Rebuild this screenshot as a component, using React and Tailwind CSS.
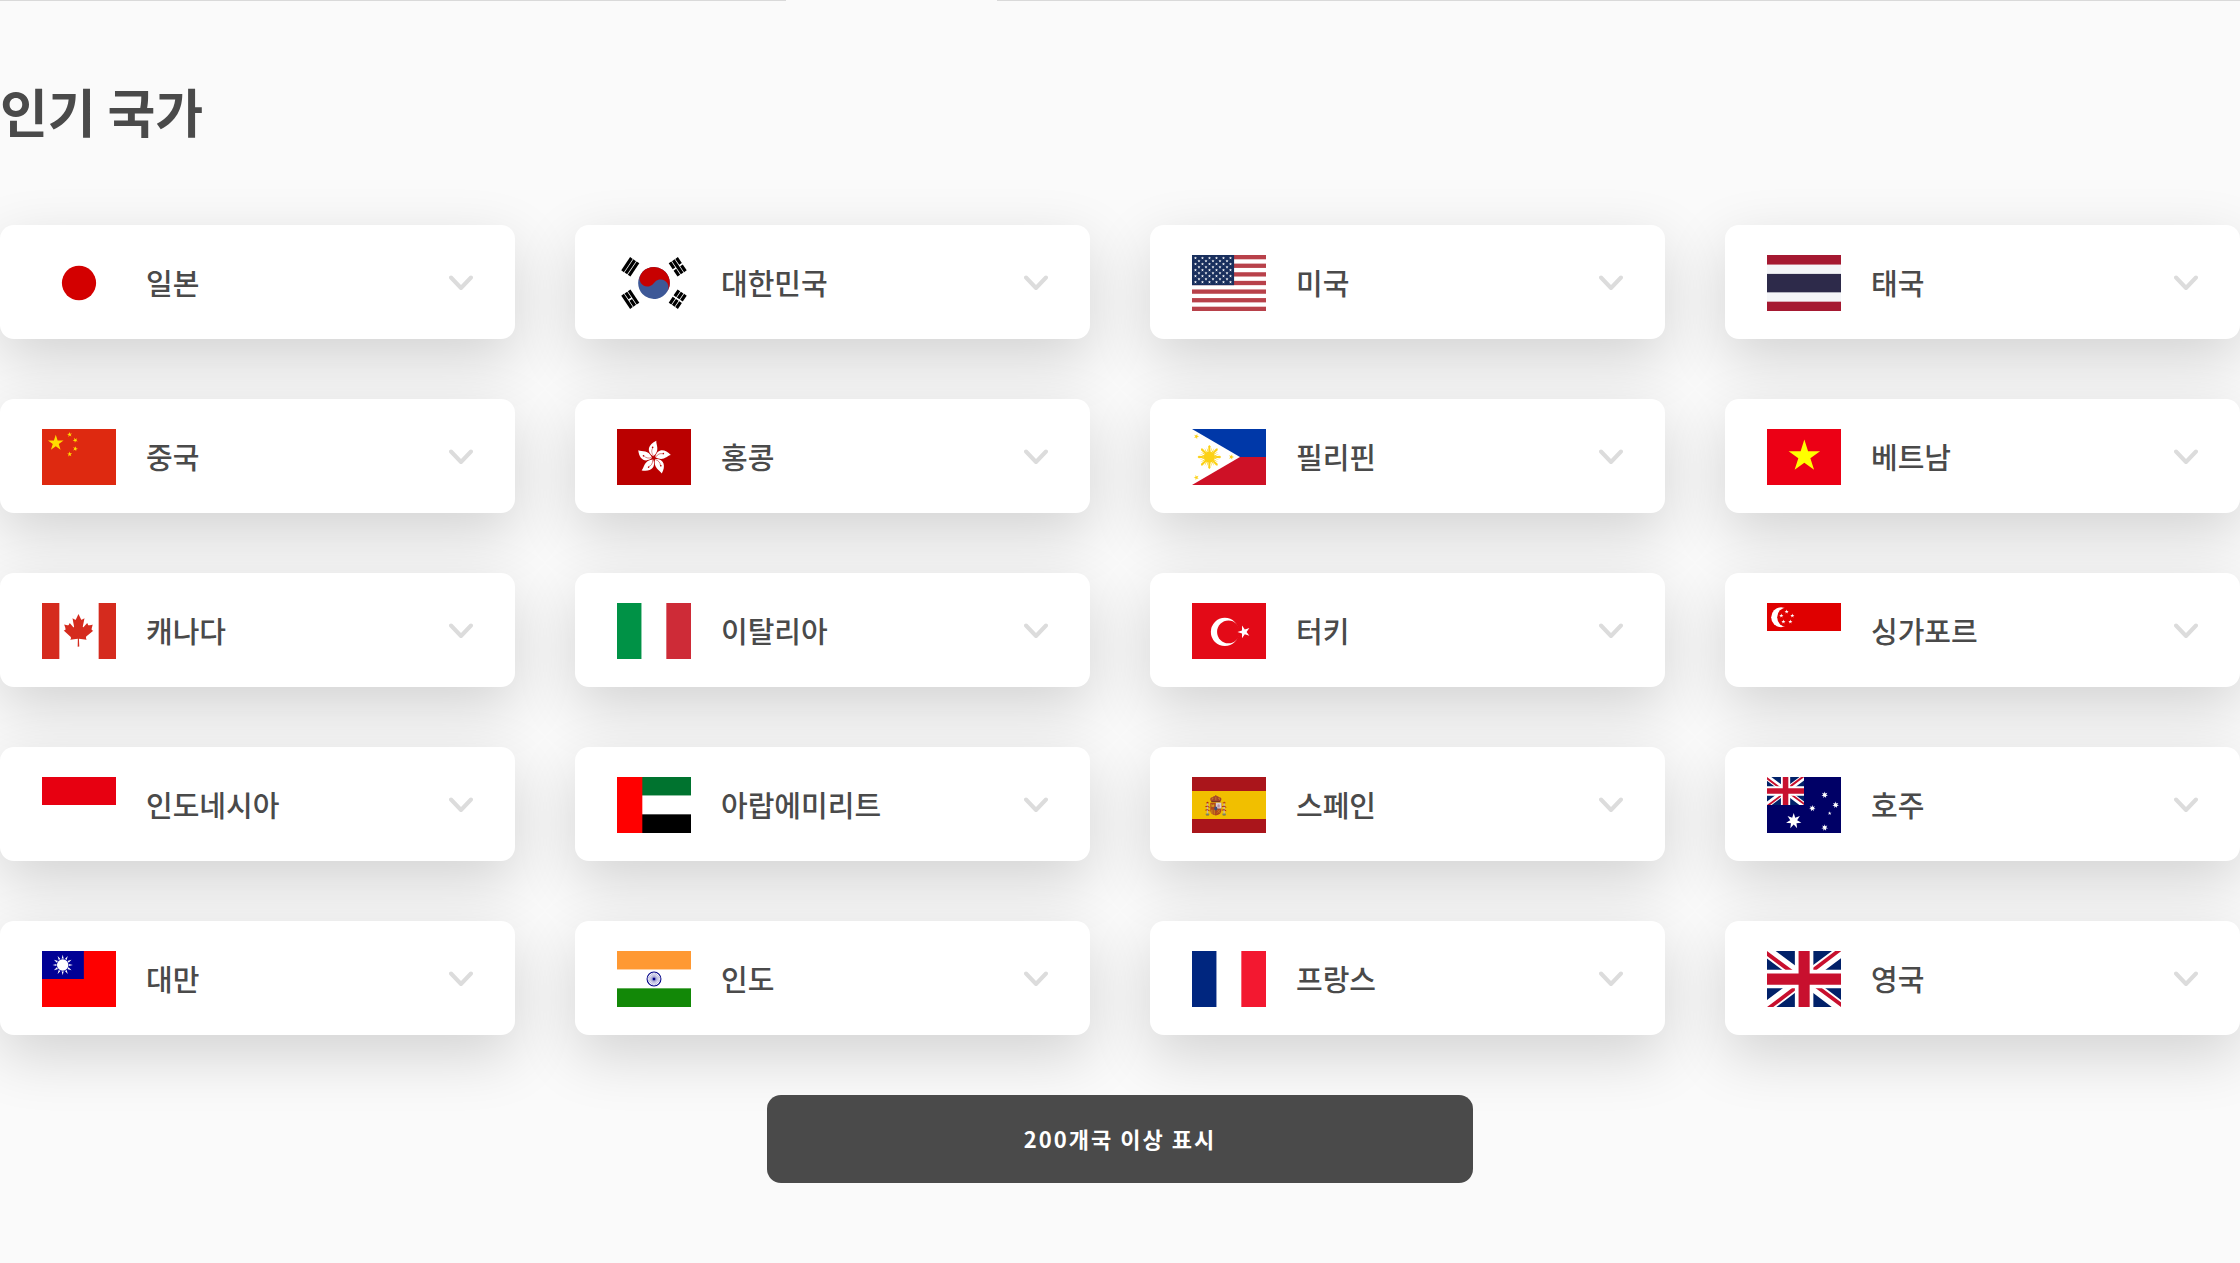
import { useState } from 'react'

// points of a regular star, first tip at angle `rot` (degrees, -90 = up)
function starPoints(cx, cy, r, rot = -90, n = 5, inner = 0.382) {
  const pts = []
  for (let i = 0; i < n * 2; i++) {
    const a = ((rot + (i * 180) / n) * Math.PI) / 180
    const d = i % 2 ? r * inner : r
    pts.push(`${(cx + d * Math.cos(a)).toFixed(1)},${(cy + d * Math.sin(a)).toFixed(1)}`)
  }
  return pts.join(' ')
}

function Star({ x, y, r, rot, n, inner, fill }) {
  return <polygon points={starPoints(x, y, r, rot, n, inner)} fill={fill} />
}

function Bands({ colors, vertical }) {
  const n = colors.length
  return colors.map((c, i) =>
    vertical
      ? <rect key={i} x={(640 / n) * i} width={640 / n} height="480" fill={c} />
      : <rect key={i} y={(480 / n) * i} width="640" height={480 / n} fill={c} />
  )
}

function Japan() {
  return <circle cx="320" cy="240" r="148" fill="#d30000" />
}

function Korea() {
  // 1 = solid bar, 0 = broken bar, outermost first
  const trigrams = [
    { rot: -56, bars: [1, 1, 1] },
    { rot: 56, bars: [0, 1, 0] },
    { rot: 124, bars: [0, 0, 0] },
    { rot: -124, bars: [1, 0, 1] },
  ]
  return (
    <g transform="translate(320 240) scale(11.4)">
      {trigrams.map(t => (
        <g key={t.rot} transform={`rotate(${t.rot}) translate(0 -21.7)`}>
          {t.bars.map((solid, i) => solid
            ? <rect key={i} x="-6" y={i * 3 - 4.2} width="12" height="2.4" />
            : <path key={i} d={`M-6 ${i * 3 - 4.2}h5.4v2.4H-6zM.6 ${i * 3 - 4.2}H6v2.4H.6z`} />
          )}
        </g>
      ))}
      <g transform="rotate(33.7)">
        <circle r="12" fill="#3d5897" />
        <path d="M-12 0A12 12 0 0 1 12 0A6 6 0 0 0 0 0A6 6 0 0 1 -12 0" fill="#c70000" />
      </g>
    </g>
  )
}

function Usa() {
  const stars = []
  for (let row = 0; row < 9; row++) {
    for (let col = row % 2; col < 11; col += 2) {
      stars.push(<Star key={`${row}-${col}`} x={30 + col * 30.3} y={26 + row * 25.8} r={14} fill="#fff" />)
    }
  }
  return (
    <>
      <rect width="640" height="480" fill="#fff" />
      {[0, 2, 4, 6, 8, 10, 12].map(i => <rect key={i} y={i * 36.92} width="640" height="36.92" fill="#b8414a" />)}
      <rect width="364" height="258.5" fill="#192f5d" />
      {stars}
    </>
  )
}

function Thailand() {
  return (
    <>
      <rect width="640" height="480" fill="#a51931" />
      <rect y="82" width="640" height="318" fill="#f4f5f8" />
      <rect y="162" width="640" height="158" fill="#2d2a4a" />
    </>
  )
}

function China() {
  return (
    <>
      <rect width="640" height="480" fill="#de2910" />
      <Star x={119} y={120} r={71} fill="#ffde00" />
      <Star x={239} y={48} r={23} rot={-240} fill="#ffde00" />
      <Star x={288} y={96} r={23} rot={-262} fill="#ffde00" />
      <Star x={288} y={170} r={23} rot={-290} fill="#ffde00" />
      <Star x={239} y={216} r={23} rot={-310} fill="#ffde00" />
    </>
  )
}

function HongKong() {
  return (
    <>
      <rect width="640" height="480" fill="#ba0000" />
      <g transform="translate(318 248)">
        {[0, 72, 144, 216, 288].map(a => (
          <g key={a} transform={`rotate(${a})`}>
            <path d="M-4 -14C-70 -56 -46 -118 22 -148C18 -112 58 -66 -4 -14Z" fill="#fff" />
            <path d="M-2 -18C-22 -44 -20 -66 -10 -84" fill="none" stroke="#ba0000" strokeWidth="4" />
            <circle cx="-10" cy="-90" r="7" fill="#ba0000" />
          </g>
        ))}
      </g>
    </>
  )
}

function Philippines() {
  return (
    <>
      <rect width="640" height="240" fill="#0038a8" />
      <rect y="240" width="640" height="240" fill="#ce1126" />
      <path d="M0 0L415 240L0 480Z" fill="#fff" />
      <g fill="#fcd116">
        <circle cx="150" cy="240" r="48" />
        {[0, 45, 90, 135, 180, 225, 270, 315].map(a => (
          <g key={a} transform={`translate(150 240) rotate(${a})`}>
            <path d="M-7 -40L-10 -92L0 -102L10 -92L7 -40Z" />
            <path d="M-14 -40L-24 -84L-8 -50ZM14 -40L24 -84L8 -50Z" />
          </g>
        ))}
      </g>
      <Star x={38} y={64} r={24} rot={-70} fill="#fcd116" />
      <Star x={38} y={416} r={24} rot={-110} fill="#fcd116" />
      <Star x={340} y={240} r={24} rot={0} fill="#fcd116" />
    </>
  )
}

function Vietnam() {
  return (
    <>
      <rect width="640" height="480" fill="#ec0015" />
      <Star x={323} y={234} r={143} fill="#ff0" />
    </>
  )
}

function Canada() {
  return (
    <path
      fill="#d52b1e"
      d="M0 0h150v480H0zM490 0h150v480H490zM201 232l-13.3 4.4 61.4 54c4.7 13.7-1.6 17.8-5.6 25l66.6-8.4-1.6 67 13.9-.3-3.1-66.6 66.7 8c-4.1-8.7-7.8-13.3-4-27.2l61.3-51-10.7-4c-8.8-6.8 3.8-32.6 5.6-48.9 0 0-35.7 12.3-38 5.8l-9.2-17.5-32.6 35.8c-3.5.9-5-.5-5.9-3.5l15-74.8-23.8 13.4c-2 .9-4 .1-5.2-2.2l-23-46-23.6 47.8c-1.8 1.7-3.6 1.9-5 .7L264 130.8l13.7 74.1c-1.1 3-3.7 3.8-6.7 2.2l-31.2-35.3c-4 6.5-6.8 17.1-12.2 19.5-5.4 2.3-23.5-4.5-35.6-7 4.2 14.8 17 39.6 9 47.7z"
    />
  )
}

function Italy() {
  return <Bands vertical colors={['#009246', '#fff', '#ce2b37']} />
}

function Turkey() {
  return (
    <>
      <rect width="640" height="480" fill="#e30a17" />
      <circle cx="284" cy="248" r="121" fill="#fff" />
      <circle cx="315" cy="248" r="98" fill="#e30a17" />
      <Star x={450} y={248} r={57} rot={180} fill="#fff" />
    </>
  )
}

function Singapore() {
  const stars = [[170, 74], [124, 109], [219, 109], [142, 160], [202, 160]]
  return (
    <>
      <rect width="640" height="240" fill="#df0000" />
      <circle cx="122" cy="122" r="86" fill="#fff" />
      <circle cx="172" cy="122" r="84" fill="#df0000" />
      {stars.map(([x, y]) => <Star key={`${x}-${y}`} x={x} y={y} r={19} fill="#fff" />)}
    </>
  )
}

function Indonesia() {
  return <rect width="640" height="240" fill="#e70011" />
}

function Emirates() {
  return (
    <>
      <Bands colors={['#00732f', '#fff', '#000']} />
      <rect width="219" height="480" fill="#f00" />
    </>
  )
}

function Spain() {
  return (
    <>
      <rect width="640" height="480" fill="#aa151b" />
      <rect y="120" width="640" height="240" fill="#f1bf00" />
      <g transform="translate(206 0)">
        {/* pillars */}
        {[-72, 72].map(x => (
          <g key={x}>
            <rect x={x - 6} y="226" width="12" height="88" fill="#c9b8a4" />
            <rect x={x - 15} y="314" width="30" height="10" fill="#5b7a8c" />
            <rect x={x - 12} y="324" width="24" height="7" fill="#8a7a30" />
            <path d={`M${x - 12} 226v-10l6 4 6-10 6 10 6-4v10z`} fill="#aa151b" />
            <path d={`M${x - 18} 254q18 -10 36 6M${x - 18} 284q18 -10 36 6`} fill="none" stroke="#aa151b" strokeWidth="8" />
          </g>
        ))}
        {/* crown */}
        <path d="M-44 206q-14 -30 16 -32q4 -12 28 -12q24 0 28 12q30 2 16 32z" fill="#a4442c" />
        <path d="M-32 196q-6 -14 12 -14M0 200v-30M32 196q6 -14 -12 -14" fill="none" stroke="#d8a520" strokeWidth="5" />
        <circle cy="160" r="6" fill="#a4442c" />
        <rect x="-40" y="206" width="80" height="10" fill="#7a3020" />
        {/* shield */}
        <path d="M-48 220h96v66q0 38 -48 44q-48 -6 -48 -44z" fill="#b0481c" />
        <path d="M0 220h48v50H0z" fill="#d9cfd4" />
        <path d="M14 262v-22q8 -12 20 0v22z" fill="#b98aa0" />
        <path d="M-38 256v-22h8v8h8v-8h8v22z" fill="#d8a520" />
        <path d="M-38 280v30M-26 280v38M-12 280v42" stroke="#d8a520" strokeWidth="5" />
        <path d="M10 280l30 30M38 280l-28 32" stroke="#d8a520" strokeWidth="4" />
        <ellipse cy="270" rx="13" ry="17" fill="#3b4c7c" />
      </g>
    </>
  )
}

function UnionJack() {
  return (
    <>
      <path fill="#012169" d="M0 0h640v480H0z" />
      <path fill="#fff" d="m75 0 244 181L562 0h78v62L400 241l240 178v61h-80L320 301 81 480H0v-60l239-178L0 64V0z" />
      <path fill="#c8102e" d="m424 281 216 159v40L369 281zm-184 20 6 35L54 480H0zM640 0v3L391 191l2-44L590 0zM0 0l239 176h-60L0 42z" />
      <path fill="#fff" d="M241 0v480h160V0zM0 160v160h640V160z" />
      <path fill="#c8102e" d="M0 193v96h640v-96zM273 0v480h96V0z" />
    </>
  )
}

function Australia() {
  return (
    <>
      <rect width="640" height="480" fill="#006" />
      <g transform="scale(.5)"><UnionJack /></g>
      <Star x={231} y={377} r={68} n={7} inner={0.45} fill="#fff" />
      <Star x={499} y={154} r={29} n={7} inner={0.45} fill="#fff" />
      <Star x={392} y={268} r={29} n={7} inner={0.45} fill="#fff" />
      <Star x={594} y={240} r={29} n={7} inner={0.45} fill="#fff" />
      <Star x={499} y={434} r={29} n={7} inner={0.45} fill="#fff" />
      <Star x={542} y={311} r={17} fill="#fff" />
    </>
  )
}

function Taiwan() {
  return (
    <>
      <rect width="640" height="480" fill="#fe0000" />
      <rect width="362" height="240" fill="#000095" />
      <Star x={179} y={120} r={88} n={12} inner={0.5} fill="#fff" />
      <circle cx="179" cy="120" r="55" fill="#000095" />
      <circle cx="179" cy="120" r="50" fill="#fff" />
    </>
  )
}

function India() {
  return (
    <>
      <Bands colors={['#ff9933', '#fff', '#128807']} />
      <g transform="translate(320 240)" stroke="#000088">
        <circle r="60" fill="none" strokeWidth="9" />
        {[0, 15, 30, 45, 60, 75, 90, 105, 120, 135, 150, 165].map(a => (
          <path key={a} d="M0 -54V54" strokeWidth="2" transform={`rotate(${a})`} />
        ))}
        <circle r="11" fill="#000088" />
      </g>
    </>
  )
}

function France() {
  return <Bands vertical colors={['#00267f', '#fff', '#f31830']} />
}

const countries = [
  { name: '일본', Flag: Japan },
  { name: '대한민국', Flag: Korea },
  { name: '미국', Flag: Usa },
  { name: '태국', Flag: Thailand },
  { name: '중국', Flag: China },
  { name: '홍콩', Flag: HongKong },
  { name: '필리핀', Flag: Philippines },
  { name: '베트남', Flag: Vietnam },
  { name: '캐나다', Flag: Canada },
  { name: '이탈리아', Flag: Italy },
  { name: '터키', Flag: Turkey },
  { name: '싱가포르', Flag: Singapore },
  { name: '인도네시아', Flag: Indonesia },
  { name: '아랍에미리트', Flag: Emirates },
  { name: '스페인', Flag: Spain },
  { name: '호주', Flag: Australia },
  { name: '대만', Flag: Taiwan },
  { name: '인도', Flag: India },
  { name: '프랑스', Flag: France },
  { name: '영국', Flag: UnionJack },
]

function CountryCard({ name, Flag, open, onToggle }) {
  return (
    <button
      type="button"
      aria-expanded={open}
      onClick={onToggle}
      className="flex items-start gap-[30px] rounded-[14px] bg-white px-[42px] pt-[30px] pb-7 text-left shadow-[0_20px_60px_rgba(0,0,0,0.16)]"
    >
      <svg className="h-14 w-[74px] shrink-0" viewBox="0 0 640 480" preserveAspectRatio="none" aria-hidden="true">
        <Flag />
      </svg>
      <span className="flex-1 text-[29px] leading-[54px] font-medium">{name}</span>
      <svg className="h-4 w-6 shrink-0 self-center" viewBox="0 0 24 16" fill="none" stroke="#dcdcdc" strokeWidth="4" strokeLinecap="round" strokeLinejoin="round" aria-hidden="true">
        <path d="M2 2.5L12 13L22 2.5" />
      </svg>
    </button>
  )
}

export default function App() {
  const [openName, setOpenName] = useState('')

  return (
    <div className="min-h-screen overflow-x-hidden bg-[#fafafa] font-['Noto_Sans_CJK_KR',sans-serif] text-[#4a4a4a]">
      <div className="grid grid-cols-[786fr_211fr_1243fr]">
        <div className="border-t border-[#d9d9d9]" />
        <div />
        <div className="border-t border-[#d9d9d9]" />
      </div>
      <main className="flex flex-col items-center pt-[70px] pb-20">
        <h1 className="w-full text-[52px] leading-[80px] font-bold">인기 국가</h1>
        <div className="mt-[74px] grid w-full grid-cols-4 gap-[60px]">
          {countries.map(c => (
            <CountryCard
              key={c.name}
              {...c}
              open={openName === c.name}
              onToggle={() => setOpenName(openName === c.name ? '' : c.name)}
            />
          ))}
        </div>
        <button type="button" className="relative mt-[60px] w-[706px] max-w-full rounded-[14px] bg-[#4a4a4a] pt-[23px] pb-[25px] text-[22px] leading-10 font-bold tracking-[2px] text-white">
          200개국 이상 표시
        </button>
      </main>
    </div>
  )
}
